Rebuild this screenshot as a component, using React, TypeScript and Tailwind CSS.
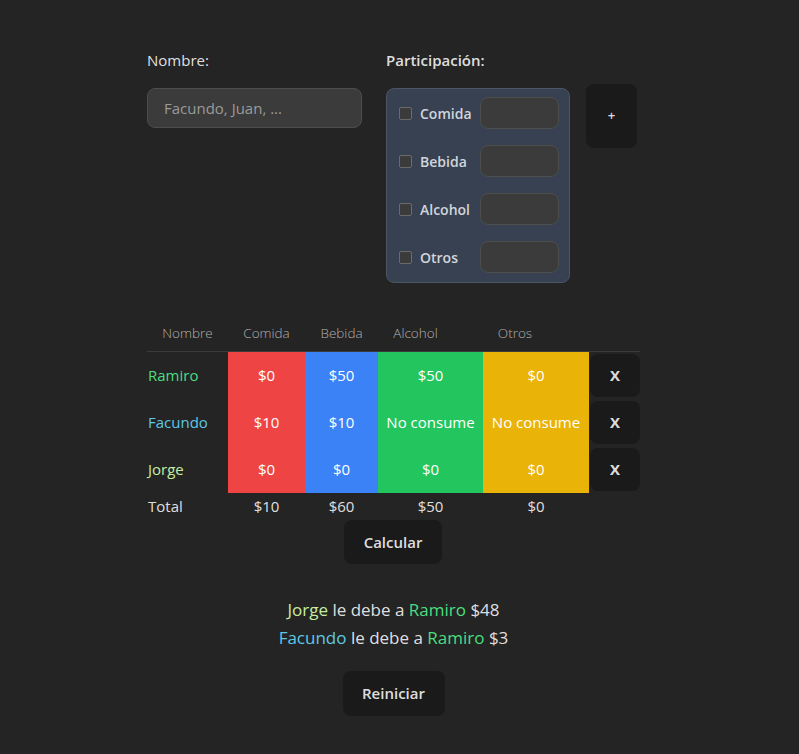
const font = { fontFamily: '"Open Sans", "Noto Sans", sans-serif' };

type Row = {
  name: string;
  color: string;
  values: string[];
};

const rows: Row[] = [
  { name: "Ramiro", color: "text-[#4ade80]", values: ["$0", "$50", "$50", "$0"] },
  { name: "Facundo", color: "text-[#5ec8e5]", values: ["$10", "$10", "No consume", "No consume"] },
  { name: "Jorge", color: "text-[#c6eea0]", values: ["$0", "$0", "$0", "$0"] },
];

const cellColors = ["bg-[#ef4444]", "bg-[#3b82f6]", "bg-[#22c55e]", "bg-[#eab308]"];
const categories = ["Comida", "Bebida", "Alcohol", "Otros"];
const grid = "grid grid-cols-[81px_77px_73px_105px_106px_51px]";

function Checkbox() {
  return <span className="block h-[13px] w-[13px] rounded-[2px] border border-[#6b6b6b] bg-[#3b3b3b]" />;
}

export default function App() {
  return (
    <div className="min-h-[754px] bg-[#242424] text-[rgba(255,255,255,0.87)]" style={font}>
      <div className="ml-[147px] w-[493px] pt-[48px] pb-[37px]">
        {/* form */}
        <div className="flex">
          <div className="w-[215px]">
            <label className="block text-[15px] leading-6">Nombre:</label>
            <div className="mt-4 flex h-10 items-center rounded-lg border border-[#4d4d4d] bg-[#3b3b3b] px-4 text-[15px] text-[#9a9a9a]">
              Facundo, Juan, ...
            </div>
          </div>
          <div className="ml-[24px]">
            <label className="block text-[15px] font-semibold leading-6">Participación:</label>
            <div className="mt-4 flex w-[184px] flex-col gap-4 rounded-lg border border-[#4b5563] bg-[#374151] pt-[8px] pr-[10px] pb-[9px] pl-[12px]">
              {categories.map((c) => (
                <div key={c} className="flex h-8 items-center">
                  <Checkbox />
                  <span className="ml-[8px] w-[60px] text-[14px] font-semibold text-[#d1d5db]">{c}</span>
                  <span className="h-8 w-[79px] rounded-lg border border-[#4d4d4d] bg-[#3b3b3b]" />
                </div>
              ))}
            </div>
          </div>
          <button className="mt-[36px] ml-[16px] flex h-16 w-[51px] items-center justify-center rounded-lg bg-[#1a1a1a] text-[13px] font-semibold">
            +
          </button>
        </div>

        {/* table */}
        <div className="mt-[36px] text-[15px]">
          <div className={`${grid} h-[33px] items-center border-b border-[#3a3a3a] pb-[4px] text-center text-[13.5px] font-light text-[#b0b0b0]`}>
            <span>Nombre</span>
            <span>Comida</span>
            <span>Bebida</span>
            <span className="pr-[30px]">Alcohol</span>
            <span className="pr-[42px]">Otros</span>
            <span />
          </div>
          {rows.map((r) => (
            <div key={r.name} className={`${grid} h-[47px]`}>
              <span className={`flex items-center pl-[1px] ${r.color}`}>{r.name}</span>
              {r.values.map((v, i) => (
                <span key={i} className={`flex items-center justify-center text-white ${cellColors[i]}`}>
                  {v}
                </span>
              ))}
              <span className="flex items-center py-[2px] pl-[1px]">
                <button className="flex h-full w-[50px] items-center justify-center rounded-lg bg-[#1a1a1a] text-[15px] font-bold">
                  X
                </button>
              </span>
            </div>
          ))}
          <div className={`${grid} h-[27px] items-center text-center`}>
            <span className="pl-[1px] text-left">Total</span>
            <span>$10</span>
            <span>$60</span>
            <span>$50</span>
            <span>$0</span>
            <span />
          </div>
        </div>

        <div className="flex flex-col items-center">
          <button className="ml-[-1px] h-[44px] w-[98px] rounded-lg bg-[#1a1a1a] text-[15px] font-semibold">
            Calcular
          </button>
          <div className="mt-[32px] text-center text-[17px] leading-7">
            <p>
              <span className="text-[#c6eea0]">Jorge</span> le debe a <span className="text-[#4ade80]">Ramiro</span> $48
            </p>
            <p>
              <span className="text-[#5ec8e5]">Facundo</span> le debe a <span className="text-[#4ade80]">Ramiro</span> $3
            </p>
          </div>
          <button className="mt-[19px] h-[45px] w-[102px] rounded-lg bg-[#1a1a1a] text-[15px] font-semibold">
            Reiniciar
          </button>
        </div>
      </div>
    </div>
  );
}
